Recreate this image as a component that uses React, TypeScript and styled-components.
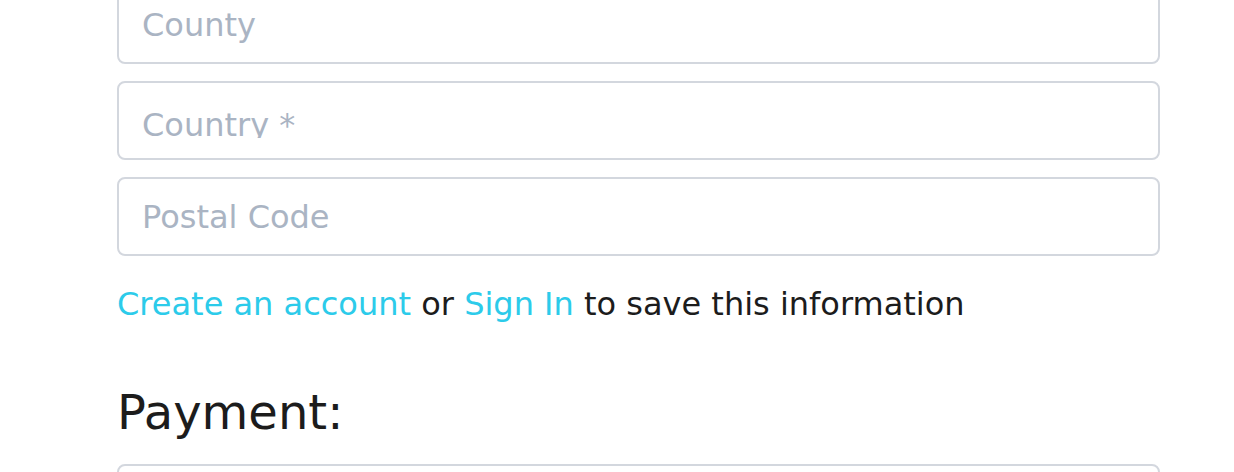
import styled, { createGlobalStyle } from 'styled-components';

const GlobalStyle = createGlobalStyle`
  html, body {
    margin: 0;
    padding: 0;
    background: #ffffff;
    overflow: hidden;
  }
  body {
    font-family: "DejaVu Sans", "Open Sans", sans-serif;
    color: #1c1c1c;
  }
`

const FontStack = '"DejaVu Sans", "Open Sans", sans-serif';
const FieldHeight = '79px';

export default function App() {
  return (
    <>
      <GlobalStyle />
      <Page>
        <Form>
          <Fields>
            <Input placeholder="County" />
            <Select>
              <SelectValue>Country *</SelectValue>
            </Select>
            <Input placeholder="Postal Code" />
          </Fields>

          <Notice>
            <Link href="#">Create an account</Link> or <Link href="#">Sign In</Link> to save this information
          </Notice>

          <Heading>Payment:</Heading>

          <Fields>
            <Input placeholder="" />
          </Fields>
        </Form>
      </Page>
    </>
  );
}

const Page = styled.div`
  width: 100%;
  height: 472px;
  overflow: hidden;
`

const Form = styled.form`
  margin: -15px 0 0 117px;
  width: 1043px;
`

const Fields = styled.div`
  display: flex;
  flex-direction: column;
  gap: 17px;
`

const Input = styled.input`
  box-sizing: border-box;
  display: block;
  width: 100%;
  height: ${FieldHeight};
  margin: 0;
  border: 2px solid #d3d7de;
  border-radius: 8px;
  padding: 0 23px;
  font-family: ${FontStack};
  font-size: 32px;
  color: #1c1c1c;
  outline: none;
  background: #ffffff;

  &::placeholder{
    color: #aab4c3;
  }
`

const Select = styled.div`
  box-sizing: border-box;
  width: 100%;
  height: ${FieldHeight};
  border: 2px solid #d3d7de;
  border-radius: 8px;
  padding: 0 23px;
  display: flex;
  align-items: flex-start;
  background: #ffffff;
`

const SelectValue = styled.span`
  margin-top: 22px;
  height: 33px;
  overflow: hidden;
  font-family: ${FontStack};
  font-size: 32px;
  line-height: 40px;
  color: #aab4c3;
`

const Notice = styled.p`
  margin: 26px 0 0;
  font-family: ${FontStack};
  font-size: 32px;
  line-height: 44px;
  color: #1c1c1c;
`

const Link = styled.a`
  color: #2ccbea;
  text-decoration: none;
`

const Heading = styled.h2`
  margin: 58px 0 24px;
  font-family: ${FontStack};
  font-size: 48px;
  font-weight: 400;
  line-height: 56px;
  color: #1c1c1c;
`
